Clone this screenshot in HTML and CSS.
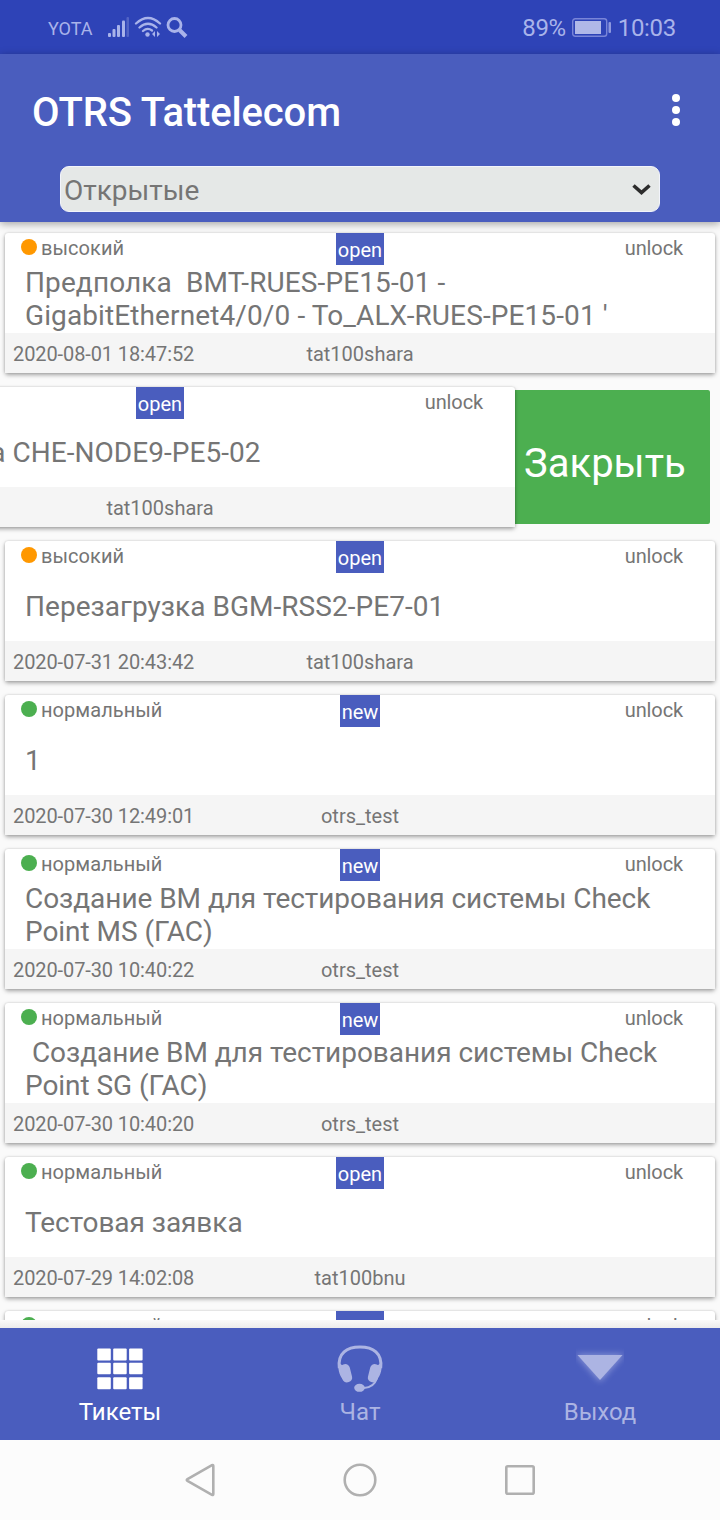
FILE: index.html
```html
<!DOCTYPE html>
<html lang="ru">
<head>
<meta charset="utf-8">
<title>OTRS Tattelecom</title>
<link rel="stylesheet" href="styles.css">
</head>
<body>
<div class="screen">
  <div class="statusbar">
    <span class="carrier">YOTA</span>
    <svg class="signals" width="82" height="24" viewBox="0 0 82 24">
      <g fill="#a9b3ea">
        <rect x="1" y="17" width="3" height="4" rx="1"/>
        <rect x="5.500" y="13" width="3" height="8" rx="1"/>
        <rect x="10" y="9" width="3" height="12" rx="1"/>
        <rect x="15" y="4.500" width="3" height="16.500" rx="1"/>
        <rect x="19.500" y="1" width="2.500" height="20" rx="1" opacity=".3"/>
        <circle cx="40.500" cy="18.500" r="2.200"/>
        <path d="M48 15v6l-3-3zM50 15v6l3-3z"/>
      </g>
      <g fill="none" stroke="#a9b3ea" stroke-width="2.300" stroke-linecap="round">
        <path d="M29 7.500Q41-3.500 53 7.500M32.500 11.500Q41 4 49.500 11.500M36 15Q40.500 11 45 14.500"/>
        <circle cx="67.500" cy="9" r="6.500" stroke-width="2.800"/>
        <path d="M72.500 14l6.500 6.500" stroke-width="4" stroke-linecap="butt"/>
      </g>
    </svg>
    <span class="battery-level">89%</span>
    <svg class="battery" width="40" height="20" viewBox="0 0 40 20">
      <rect x=".7" y=".7" width="34" height="17.600" rx="2.500" fill="none" stroke="#7985d8" stroke-width="1.400"/>
      <rect x="3" y="3" width="26" height="13" fill="#b0b8e8"/>
      <rect x="36.500" y="4" width="2.500" height="11" rx="1" fill="#8d98df"/>
    </svg>
    <span class="clock">10:03</span>
  </div>

  <header class="appbar">
    <div class="title-row">
      <h1 class="app-title">OTRS Tattelecom</h1>
      <div class="more"><i></i><i></i><i></i></div>
    </div>
    <div class="filter">
      <span>Открытые</span>
      <svg width="20" height="14" viewBox="0 0 20 14"><path d="M1.500 3.500l8 7 8-7" fill="none" stroke="#2c2c2c" stroke-width="3.600"/></svg>
    </div>
  </header>

  <main class="list">
    <div class="row"><article class="card">
      <div class="head"><span class="priority high">высокий</span><span class="state">open</span><span class="lock">unlock</span></div>
      <div class="subject latin">Предполка&nbsp; BMT-RUES-PE15-01 -<br>GigabitEthernet4/0/0 - To_ALX-RUES-PE15-01 '</div>
      <div class="foot"><span class="date">2020-08-01 18:47:52</span><span>tat100shara</span></div>
    </article></div>

    <div class="row swiped"><article class="card">
      <div class="head"><span class="priority high">высокий</span><span class="state">open</span><span class="lock">unlock</span></div>
      <div class="subject single">Перезагрузка CHE-NODE9-PE5-02</div>
      <div class="foot"><span></span><span>tat100shara</span></div>
    </article><div class="close-action">Закрыть</div></div>

    <div class="row"><article class="card">
      <div class="head"><span class="priority high">высокий</span><span class="state">open</span><span class="lock">unlock</span></div>
      <div class="subject single">Перезагрузка BGM-RSS2-PE7-01</div>
      <div class="foot"><span class="date">2020-07-31 20:43:42</span><span>tat100shara</span></div>
    </article></div>

    <div class="row"><article class="card">
      <div class="head"><span class="priority">нормальный</span><span class="state">new</span><span class="lock">unlock</span></div>
      <div class="subject single">1</div>
      <div class="foot"><span class="date">2020-07-30 12:49:01</span><span>otrs_test</span></div>
    </article></div>

    <div class="row"><article class="card">
      <div class="head"><span class="priority">нормальный</span><span class="state">new</span><span class="lock">unlock</span></div>
      <div class="subject">Создание ВМ для тестирования системы Check<br>Point MS (ГАС)</div>
      <div class="foot"><span class="date">2020-07-30 10:40:22</span><span>otrs_test</span></div>
    </article></div>

    <div class="row"><article class="card">
      <div class="head"><span class="priority">нормальный</span><span class="state">new</span><span class="lock">unlock</span></div>
      <div class="subject">&nbsp;Создание ВМ для тестирования системы Check<br>Point SG (ГАС)</div>
      <div class="foot"><span class="date">2020-07-30 10:40:20</span><span>otrs_test</span></div>
    </article></div>

    <div class="row"><article class="card">
      <div class="head"><span class="priority">нормальный</span><span class="state">open</span><span class="lock">unlock</span></div>
      <div class="subject single cyrillic">Тестовая заявка</div>
      <div class="foot"><span class="date">2020-07-29 14:02:08</span><span>tat100bnu</span></div>
    </article></div>

    <div class="row"><article class="card">
      <div class="head"><span class="priority">нормальный</span><span class="state">open</span><span class="lock">unlock</span></div>
    </article></div>
  </main>

  <div class="tab-shade"></div>
  <nav class="tabs">
    <div class="tab active">
      <svg width="48" height="48" viewBox="0 0 48 48" fill="#fff">
        <rect x="1.300" y="4.500" width="13.500" height="12" rx="1"/><rect x="17.200" y="4.500" width="13.500" height="12" rx="1"/><rect x="33.100" y="4.500" width="13.500" height="12" rx="1"/>
        <rect x="1.300" y="18.800" width="13.500" height="11.500" rx="1"/><rect x="17.200" y="18.800" width="13.500" height="11.500" rx="1"/><rect x="33.100" y="18.800" width="13.500" height="11.500" rx="1"/>
        <rect x="1.300" y="33.300" width="13.500" height="12" rx="1"/><rect x="17.200" y="33.300" width="13.500" height="12" rx="1"/><rect x="33.100" y="33.300" width="13.500" height="12" rx="1"/>
      </svg>
      <span>Тикеты</span>
    </div>
    <div class="tab">
      <svg width="48" height="48" viewBox="0 0 48 48">
        <path d="M3.300 24C1.500 9 11 3 24 3S46.500 9 44.700 24" fill="none" stroke="#acb4e3" stroke-width="3"/>
        <path d="M2 18C2 27 4 34 9 37l2-12zM46 18C46 27 44 34 39 37l-2-12z" fill="#acb4e3"/>
        <rect x="5" y="20" width="10" height="18.500" rx="4.500" transform="rotate(-14 10 29)" fill="#acb4e3"/>
        <rect x="33" y="20" width="10" height="18.500" rx="4.500" transform="rotate(14 38 29)" fill="#acb4e3"/>
        <path d="M41 34Q38 43.500 28 44" fill="none" stroke="#acb4e3" stroke-width="2"/>
        <ellipse cx="23.500" cy="43.800" rx="5.300" ry="4" fill="#acb4e3"/>
      </svg>
      <span>Чат</span>
    </div>
    <div class="tab">
      <svg width="48" height="48" viewBox="0 0 48 48">
        <defs><filter id="glow" x="-20%" y="-40%" width="140%" height="180%"><feGaussianBlur stdDeviation="3"/></filter><filter id="soft"><feGaussianBlur stdDeviation=".6"/></filter></defs>
        <path d="M-1 10h50L24 38z" fill="#acb4e3" opacity=".6" filter="url(#glow)"/>
        <path d="M1.500 11h45L24 36z" fill="#acb4e3" filter="url(#soft)"/>
      </svg>
      <span>Выход</span>
    </div>
  </nav>

  <div class="navbar">
    <svg width="36" height="36" viewBox="0 0 36 36"><path d="M30 3.200Q31.300 2.500 31.300 4V32Q31.300 33.500 30 32.800L5.500 19Q4 18 5.500 17Z"/></svg>
    <svg width="36" height="36" viewBox="0 0 36 36"><circle cx="18" cy="18" r="15.300"/></svg>
    <svg width="36" height="36" viewBox="0 0 36 36"><rect x="4.300" y="4.300" width="27.400" height="27.400" rx="1.500"/></svg>
  </div>
</div>
</body>
</html>
```

FILE: styles.css
```css
* { box-sizing: border-box; }
body {
  margin: 0;
  background: #fafafa;
  font-family: Roboto, "Noto Sans", sans-serif;
  color: #757575;
}
.screen {
  width: 720px;
  height: 1520px;
  display: flex;
  flex-direction: column;
  overflow: hidden;
}
.statusbar {
  height: 54px;
  flex: none;
  display: flex;
  align-items: center;
  padding: 2px 44px 0 48px;
  background: #2e43b7;
  color: #a9b3ea;
  font-size: 24px;
}
.carrier { font-size: 18px; width: 59px; }
.signals { margin-top: -1px; }
.battery-level { margin-left: auto; letter-spacing: -.4px; }
.battery { margin: -1px 6px 0; }
.clock { letter-spacing: -.3px; }

.appbar {
  position: relative;
  z-index: 2;
  height: 168px;
  flex: none;
  background: #4a5dbe;
  box-shadow: 0 2px 8px rgba(0, 0, 0, .35);
}
.title-row {
  height: 112px;
  padding: 4px 40px 0 32px;
  display: flex;
  align-items: center;
  justify-content: space-between;
}
.app-title { margin: 0; font-size: 40px; font-weight: 500; letter-spacing: -.13px; color: #fff; }
.more { display: grid; gap: 4px; margin-top: -4px; }
.more i { width: 8px; height: 8px; border-radius: 50%; background: #fff; }
.filter {
  width: 600px;
  height: 46px;
  margin: 0 60px;
  padding: 2px 7px 0 3px;
  border: 1px solid #f2f4fb;
  border-radius: 9px;
  background: #e5e8e7;
  display: flex;
  align-items: center;
  justify-content: space-between;
  font-size: 28px;
}
.filter svg { margin-top: -3px; }

.list {
  height: 1098px;
  flex: none;
  padding-top: 11px;
  display: flex;
  flex-direction: column;
  gap: 14px;
  overflow: hidden;
}
.row { flex: none; display: flex; padding: 0 5px; }
.card {
  position: relative;
  z-index: 1;
  flex: none;
  width: 710px;
  height: 140px;
  border-radius: 3px;
  background: #fff;
  box-shadow: 0 2px 4px rgba(0, 0, 0, .35), 0 0 2px rgba(0, 0, 0, .15);
  font-size: 20px;
}
.head {
  height: 32px;
  display: grid;
  grid-template-columns: 323px 32px 1fr;
  align-items: start;
  padding: 0 32px 0 16px;
}
.priority { display: flex; align-items: center; gap: 4px; line-height: 30px; letter-spacing: .05px; }
.priority::before {
  content: "";
  width: 16px;
  height: 16px;
  margin-top: -2px;
  border-radius: 50%;
  background: #4caf50;
}
.priority.high::before { background: #ff9800; }
.state {
  justify-self: center;
  height: 32px;
  padding: 0 2px;
  background: #4a5dbe;
  color: #fff;
  line-height: 34px;
}
.lock { justify-self: end; line-height: 30px; letter-spacing: -.12px; }
.subject {
  height: 68px;
  padding: 0 20px;
  font-size: 28px;
  line-height: 33px;
  letter-spacing: -.05px;
  white-space: nowrap;
  padding-top: 1px;
}
.subject.latin { letter-spacing: .11px; }
.subject.single { padding-top: 17px; letter-spacing: .04px; }
.subject.cyrillic { letter-spacing: -.06px; }
.foot {
  height: 40px;
  display: grid;
  grid-template-columns: 1fr auto 1fr;
  padding: 0 8px;
  background: #f5f5f5;
  line-height: 42px;
}
.date { letter-spacing: -.1px; }
.swiped .card { margin-left: -200px; }
.close-action {
  flex: 1;
  height: 134px;
  margin: 3px 5px 0 0;
  padding: 7px 0 0 9px;
  border-radius: 0 2px 2px 0;
  background: #4caf50;
  color: #fff;
  font-size: 40px;
  line-height: 134px;
}

.tab-shade { height: 8px; flex: none; background: linear-gradient(#fafafa, #ebebeb); }
.tabs {
  height: 112px;
  flex: none;
  display: grid;
  grid-template-columns: repeat(3, 1fr);
  background: #4a5dbe;
}
.tab {
  display: flex;
  flex-direction: column;
  align-items: center;
  padding-top: 16px;
  color: #acb4e3;
  font-size: 24px;
  line-height: 28px;
}
.tab span { margin-top: 6px; }
.tab.active { color: #fff; }
.navbar {
  height: 80px;
  flex: none;
  display: flex;
  align-items: center;
  justify-content: center;
  gap: 124px;
  background: #fcfcfc;
}
.navbar svg { fill: none; stroke: #b0b0b0; stroke-width: 2.6; }
```
